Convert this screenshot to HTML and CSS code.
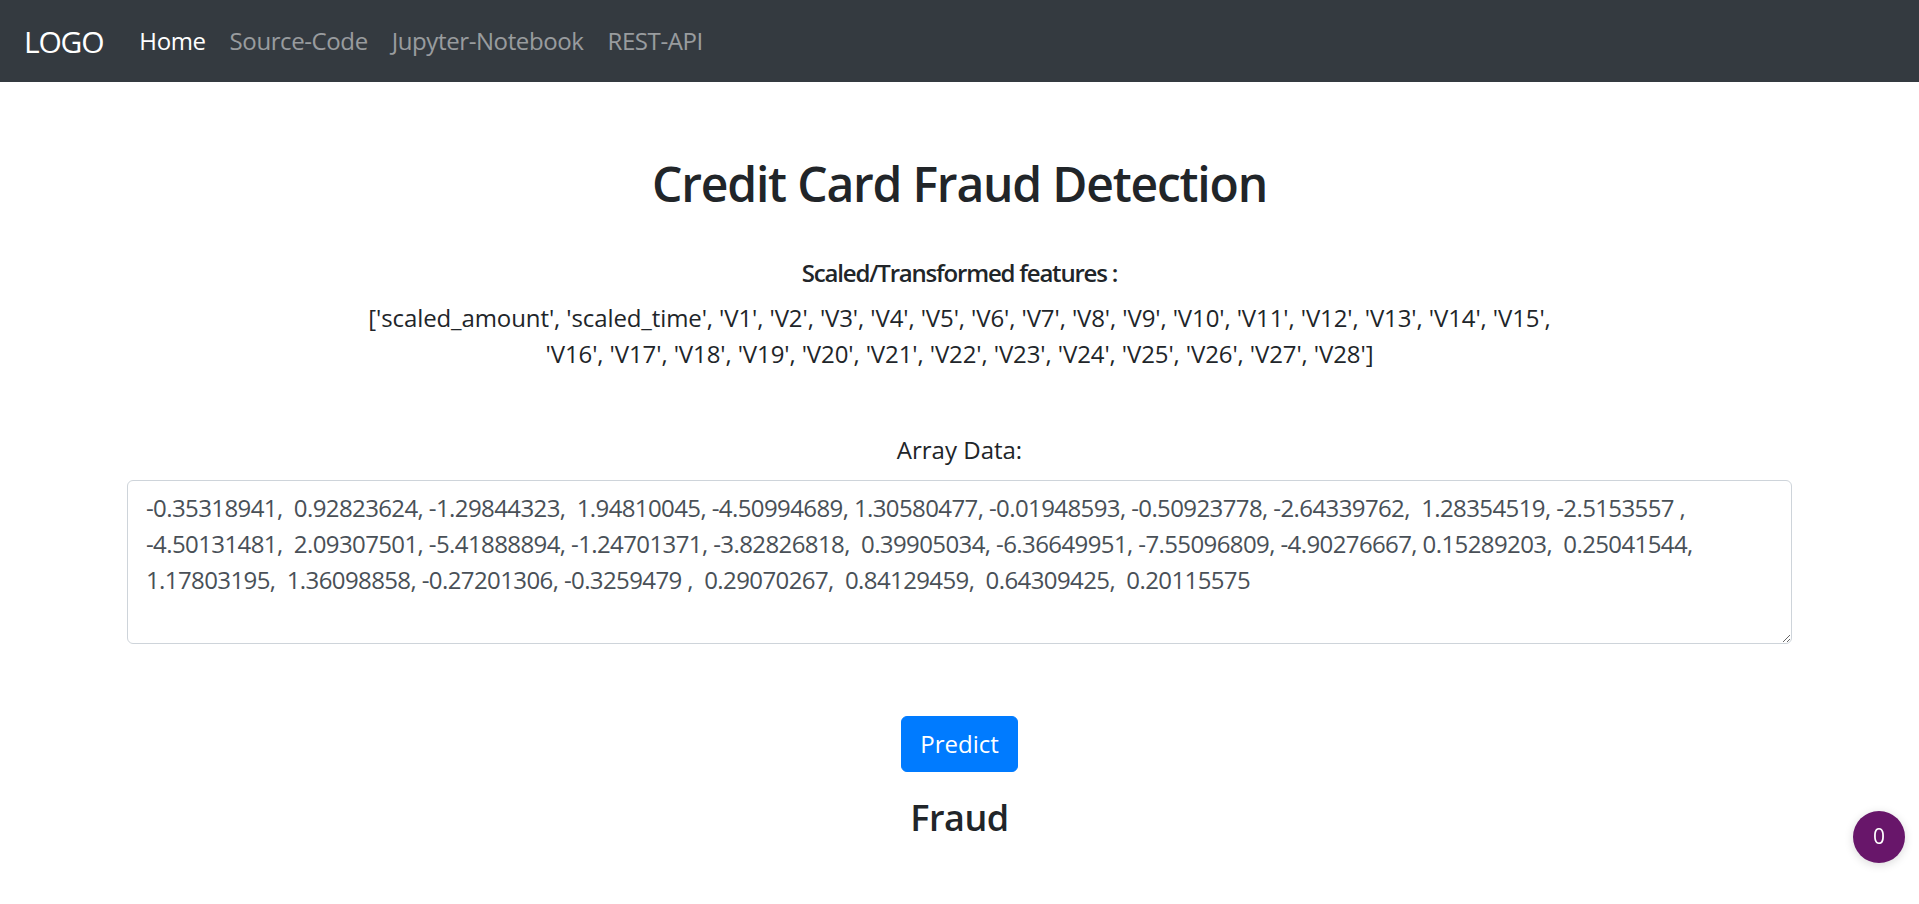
FILE: index.html
```html
<!DOCTYPE html>
<html lang="en">
<head>
<meta charset="utf-8">
<title>Credit Card Fraud Detection</title>
<link rel="stylesheet" href="styles.css">
</head>
<body>
<nav class="navbar">
  <a class="brand" href="#">LOGO</a>
  <ul class="nav">
    <li><a class="nav-link active" href="#">Home</a></li>
    <li><a class="nav-link" href="#">Source-Code</a></li>
    <li><a class="nav-link" href="#">Jupyter-Notebook</a></li>
    <li><a class="nav-link" href="#">REST-API</a></li>
  </ul>
</nav>
<main class="container">
  <h1 class="title">Credit Card Fraud Detection</h1>
  <p class="features-label">Scaled/Transformed features :</p>
  <p class="features">['scaled_amount', 'scaled_time', 'V1', 'V2', 'V3', 'V4', 'V5', 'V6', 'V7', 'V8', 'V9', 'V10', 'V11', 'V12', 'V13', 'V14', 'V15',<br>'V16', 'V17', 'V18', 'V19', 'V20', 'V21', 'V22', 'V23', 'V24', 'V25', 'V26', 'V27', 'V28']</p>
  <form class="form">
    <label class="form-label" for="data">Array Data:</label>
    <textarea id="data" class="form-control" rows="4">-0.35318941,  0.92823624, -1.29844323,  1.94810045, -4.50994689, 1.30580477, -0.01948593, -0.50923778, -2.64339762,  1.28354519, -2.5153557 ,
-4.50131481,  2.09307501, -5.41888894, -1.24701371, -3.82826818,  0.39905034, -6.36649951, -7.55096809, -4.90276667, 0.15289203,  0.25041544,
1.17803195,  1.36098858, -0.27201306, -0.3259479 ,  0.29070267,  0.84129459,  0.64309425,  0.20115575</textarea>
    <button type="button" class="btn">Predict</button>
  </form>
  <h4 class="result">Fraud</h4>
</main>
<div class="badge">0</div>
</body>
</html>
```
FILE: styles.css
```css
* { box-sizing: border-box; }
html, body { margin: 0; padding: 0; }
body {
  font-family: "Open Sans", "Noto Sans", sans-serif;
  font-size: 24px;
  line-height: 1.5;
  color: #212529;
  background: #fff;
}
.navbar {
  display: flex;
  align-items: center;
  background: #343a40;
  padding: 11px 24px;
}
.brand {
  color: #fff;
  text-decoration: none;
  font-size: 30px;
  line-height: 45px;
  letter-spacing: -1.2px;
  padding: 7px 0;
  margin-right: 24px;
}
.nav {
  display: flex;
  list-style: none;
  margin: 0;
  padding: 0;
}
.nav-link {
  display: block;
  padding: 12px 12px;
  color: rgba(255,255,255,.5);
  text-decoration: none;
  letter-spacing: -0.4px;
}
.nav-link.active { color: #fff; }
.container {
  width: 1710px;
  margin: 0 auto;
  padding: 0 22.5px;
  text-align: center;
}
.title {
  font-size: 48px;
  font-weight: 600;
  line-height: 1.2;
  letter-spacing: -1.2px;
  margin: 73px 0 42px;
}
.features-label {
  font-weight: 600;
  letter-spacing: -1.2px;
  margin: 0 0 9px;
}
.features {
  margin: 0 0 60px;
  letter-spacing: -0.1px;
}
.form { display: flex; flex-direction: column; align-items: center; }
.form-label {
  display: block;
  margin-bottom: 12px;
}
.form-control {
  display: block;
  width: 100%;
  height: 164px;
  padding: 9px 18px;
  font-family: inherit;
  font-size: 24px;
  line-height: 1.5;
  letter-spacing: -0.6px;
  color: #495057;
  background: #fff;
  border: 1px solid #ced4da;
  border-radius: 6px;
  margin: 0;
}
.btn {
  margin-top: 72px;
  font-family: inherit;
  font-size: 24px;
  line-height: 1.5;
  color: #fff;
  background: #007bff;
  border: 1px solid #007bff;
  border-radius: 6px;
  padding: 9px 18px;
}
.result {
  font-size: 36px;
  font-weight: 600;
  line-height: 1.2;
  letter-spacing: -0.5px;
  margin: 24px 0 0;
}
.badge {
  position: fixed;
  right: 14px;
  bottom: 41px;
  width: 52px;
  height: 52px;
  border-radius: 50%;
  background: #68166a;
  color: #fff;
  font-size: 21px;
  display: flex;
  align-items: center;
  justify-content: center;
  box-shadow: 0 2px 10px rgba(0,0,0,.15);
}
```
